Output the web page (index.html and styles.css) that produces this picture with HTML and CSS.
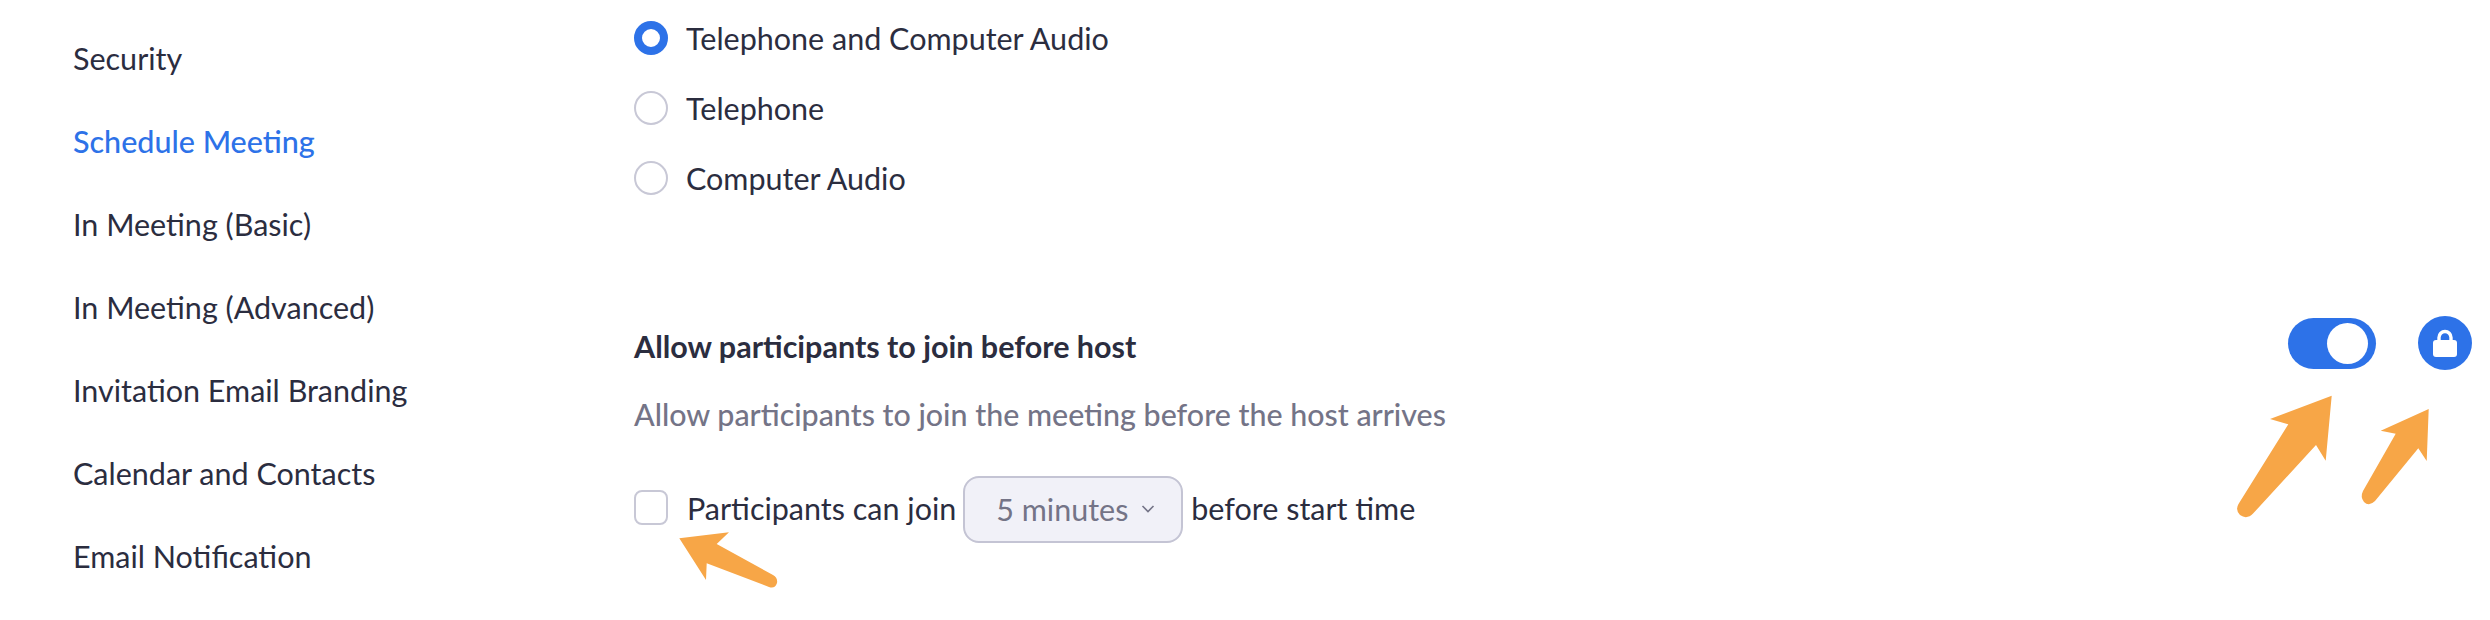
FILE: index.html
```html
<!DOCTYPE html>
<html lang="en">
<head>
    <meta charset="UTF-8">
    <meta name="viewport" content="width=device-width, initial-scale=1.0">
    <title>Settings</title>
    <link rel="stylesheet" href="styles.css">
</head>
<body>
    <div class="page">
        <nav class="sidebar">
            <div class="nav-item">Security</div>
            <div class="nav-item active">Schedule Meeting</div>
            <div class="nav-item">In Meeting (Basic)</div>
            <div class="nav-item">In Meeting (Advanced)</div>
            <div class="nav-item">Invitation Email Branding</div>
            <div class="nav-item">Calendar and Contacts</div>
            <div class="nav-item">Email Notification</div>
        </nav>
        <main class="content">
            <div class="audio-options">
                <div class="option"><span class="radio checked"></span>Telephone and Computer Audio</div>
                <div class="option"><span class="radio"></span>Telephone</div>
                <div class="option"><span class="radio"></span>Computer Audio</div>
            </div>
            <div class="setting-head">
                <div class="setting-title">Allow participants to join before host</div>
                <div class="setting-controls">
                    <span class="toggle"><span class="knob"></span></span>
                    <span class="lock">
                        <svg width="26" height="30" viewBox="0 0 26 30">
                            <path d="M7 14V9.500a6 6 0 0 1 12 0V14" fill="none" stroke="#fff" stroke-width="3.400"/>
                            <rect x="1" y="12" width="24" height="17" rx="3" fill="#fff"/>
                        </svg>
                    </span>
                </div>
            </div>
            <div class="setting-desc">Allow participants to join the meeting before the host arrives</div>
            <div class="setting-row">
                <span class="checkbox"></span>
                <span class="row-text">Participants can join</span>
                <span class="select"><span class="select-text">5 minutes</span>
                    <svg width="14" height="10" viewBox="0 0 14 10"><path d="M1.500 2l5.500 5.500L12.500 2" fill="none" stroke="#747487" stroke-width="1.600"/></svg>
                </span>
                <span class="row-text">before start time</span>
            </div>
        </main>
        <svg class="arrows" width="2490" height="620" viewBox="0 0 2490 620">
            <path d="M2331.700 395.700L2270 419L2288.300 424.300L2238.500 504Q2235 510 2240 515Q2247 520 2253.300 513.300L2316 445L2325.700 460.700Z"/>
            <path d="M2428.700 409L2380.700 430.700L2395.700 433.700L2363 491Q2360 497 2364 502Q2369 507 2375 501L2418.300 448.300L2426.700 461Z"/>
            <path d="M679.300 538.300L729 532.300L716.700 544L773 575Q778 578 777 583Q775 589 769 587L706.700 563.300L706 580Z"/>
        </svg>
    </div>
</body>
</html>
```

FILE: styles.css
```css
body {
    margin: 0;
    background: #fff;
    color: #2b2d3f;
    font-family: Lato, sans-serif;
    font-size: 30.5px;
    overflow: hidden;
}
.page {
    position: relative;
    display: flex;
    width: 2490px;
    height: 620px;
    overflow: hidden;
}
.sidebar {
    width: 561px;
    padding: 17px 0 0 73px;
    flex-shrink: 0;
}
.nav-item {
    height: 83px;
    line-height: 83px;
    white-space: nowrap;
}
.active {
    color: #2d72e8;
    font-weight: 500;
}
.content {
    flex: 1;
    padding: 3px 18px 0 0;
}
.audio-options {
    height: 313px;
}
.option {
    display: flex;
    align-items: center;
    gap: 18px;
    height: 70px;
}
.radio {
    width: 34px;
    height: 34px;
    box-sizing: border-box;
    border: 2px solid #c8c8d6;
    border-radius: 50%;
}
.radio.checked {
    border: 8px solid #2d72e8;
}
.setting-head {
    display: flex;
    justify-content: space-between;
    align-items: center;
    height: 60px;
}
.setting-title {
    font-weight: 700;
}
.setting-controls {
    display: flex;
    align-items: center;
    gap: 42px;
    margin-top: -6px;
}
.toggle {
    display: flex;
    justify-content: flex-end;
    align-items: center;
    width: 88px;
    height: 51px;
    padding-right: 8px;
    box-sizing: border-box;
    background: #2d72e8;
    border-radius: 26px;
}
.knob {
    width: 41px;
    height: 41px;
    background: #fff;
    border-radius: 50%;
}
.lock {
    display: flex;
    justify-content: center;
    align-items: center;
    width: 54px;
    height: 54px;
    background: #2d72e8;
    border-radius: 50%;
}
.setting-desc {
    margin-top: 11px;
    line-height: 54px;
    color: #747487;
    font-size: 30.4px;
    font-weight: 500;
}
.setting-row {
    display: flex;
    align-items: center;
    margin-top: 35px;
    height: 67px;
}
.checkbox {
    width: 34px;
    height: 35px;
    margin: 0 19px 4px 0;
    box-sizing: border-box;
    border: 2px solid #c8c8d6;
    border-radius: 8px;
}
.row-text {
    margin-bottom: 4px;
}
.select {
    display: flex;
    align-items: center;
    gap: 13px;
    width: 220px;
    height: 67px;
    margin: 0 8px 0 7px;
    padding: 0 0 2px 31px;
    box-sizing: border-box;
    background: #f1f1f8;
    border: 2px solid #c4c4d4;
    border-radius: 16px;
    color: #747487;
}
.arrows {
    position: absolute;
    left: 0;
    top: 0;
    fill: #f7a647;
}
```
